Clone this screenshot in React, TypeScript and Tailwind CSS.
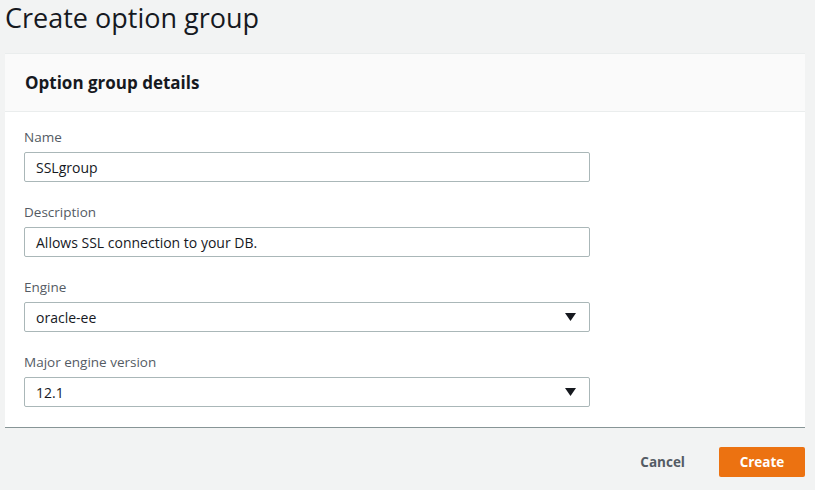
import React from "react";

function Field({ label, value, select }: { label: string; value: string; select?: boolean }) {
  return (
    <div className="flex flex-col">
      <div className="h-[20px] leading-[20px] text-[13.5px] text-[#545b64]">{label}</div>
      <div className="mt-[5px] h-[30px] w-[566px] rounded-[2px] border border-[#aab7b8] bg-white flex items-center justify-between pl-[11px] pr-[13px] text-[14px] text-[#16191f]">
        <span>{value}</span>
        {select && (
          <svg width="11" height="8" viewBox="0 0 11 8">
            <polygon points="0,0 11,0 5.5,8" fill="#16191f" />
          </svg>
        )}
      </div>
    </div>
  );
}

export default function App() {
  return (
    <div
      className="w-[815px] h-[490px] bg-[#f2f3f3] overflow-hidden"
      style={{ fontFamily: '"Open Sans", "Noto Sans", Arial, sans-serif' }}
    >
      <h1 className="pl-[5px] pt-0 h-[53px] text-[27px] leading-[35px] font-normal text-[#16191f]">
        Create option group
      </h1>
      <div className="ml-[5px] w-[800px] bg-white border-t border-[#eaeded] border-b border-b-[#879596]">
        <div className="h-[58px] bg-[#fafafa] border-b border-[#eaeded] flex items-center pl-[20px]">
          <h2 className="text-[17px] font-bold text-[#16191f]">Option group details</h2>
        </div>
        <div className="pl-[19px] pt-[15px] pb-[20px] flex flex-col gap-[20px]">
          <Field label="Name" value="SSLgroup" />
          <Field label="Description" value="Allows SSL connection to your DB." />
          <Field label="Engine" value="oracle-ee" select />
          <Field label="Major engine version" value="12.1" select />
        </div>
      </div>
      <div className="ml-[5px] w-[800px] flex justify-end items-center mt-[19px] gap-[34px]">
        <button className="text-[13.5px] font-bold text-[#545b64]">Cancel</button>
        <button className="w-[86px] h-[30px] rounded-[2px] bg-[#ec7211] text-white text-[13.5px] font-bold">
          Create
        </button>
      </div>
    </div>
  );
}
